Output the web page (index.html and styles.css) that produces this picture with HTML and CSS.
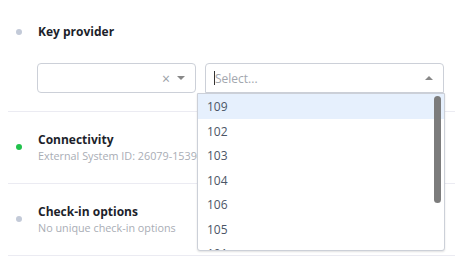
FILE: index.html
```html
<!DOCTYPE html>
<html>
  <head>
    <title>Property settings</title>
    <link rel="stylesheet" href="styles.css">
  </head>
  <body>
    <div class="settings">
      <div class="row row-key">
        <div class="row-head">
          <span class="dot"></span>
          <h3 class="title">Key provider</h3>
        </div>
        <div class="selects">
          <div class="select select-first">
            <span class="select-value"></span>
            <span class="clear">&times;</span>
            <span class="arrow arrow-down"></span>
          </div>
          <div class="select select-open">
            <span class="caret"></span>
            <span class="placeholder">Select...</span>
            <span class="arrow arrow-up"></span>
            <ul class="menu">
              <li class="active">109</li>
              <li>102</li>
              <li>103</li>
              <li>104</li>
              <li>106</li>
              <li>105</li>
              <li>101</li>
            </ul>
            <span class="thumb"></span>
          </div>
        </div>
      </div>

      <div class="row">
        <span class="dot dot-green"></span>
        <div>
          <h3 class="title">Connectivity</h3>
          <p class="sub">External System ID: 26079-15394</p>
        </div>
      </div>

      <div class="row">
        <span class="dot"></span>
        <div>
          <h3 class="title">Check-in options</h3>
          <p class="sub">No unique check-in options</p>
        </div>
      </div>
    </div>
  </body>
</html>
```

FILE: styles.css
```css
body,
html {
  margin: 0;
  height: 100%;
  overflow: hidden;
}

body {
  background: #fff;
  font-family: 'Open Sans', 'Noto Sans', sans-serif;
  color: #1d1f2b;
}

.settings {
  padding: 8px 0 0 8px;
}

.row {
  display: flex;
  align-items: center;
  padding: 19px 0 20px;
  border-bottom: 1px solid #ebebf2;
}

.row-key {
  display: block;
  padding: 15px 0 18px;
}

.row-head {
  display: flex;
  align-items: center;
}

.dot {
  width: 6px;
  height: 6px;
  border-radius: 50%;
  background: #c3cad8;
  margin-left: 8px;
  margin-right: 16px;
  flex-shrink: 0;
}

.dot-green {
  background: #21c24c;
}

.title {
  margin: 0;
  font-size: 12px;
  line-height: 17px;
  font-weight: 700;
}

.sub {
  margin: 0;
  font-size: 10.8px;
  line-height: 15px;
  color: #a9adb5;
  white-space: nowrap;
}

.selects {
  display: flex;
  gap: 9px;
  margin: 23px 0 0 29px;
}

.select {
  position: relative;
  display: flex;
  align-items: center;
  height: 30px;
  box-sizing: border-box;
  border: 1px solid #ccd0d8;
  border-radius: 4px;
  padding: 0 10px 0 8px;
  font-size: 12px;
}

.select-first {
  width: 159px;
}

.select-open {
  width: 239px;
  border-radius: 4px 4px 0 0;
}

.select-value {
  flex: 1;
}

.clear {
  color: #9a9ea6;
  font-size: 14px;
  margin-right: 7px;
}

.arrow {
  width: 0;
  height: 0;
  border-left: 4px solid transparent;
  border-right: 4px solid transparent;
}

.arrow-down {
  border-top: 4px solid #888;
}

.arrow-up {
  border-bottom: 4px solid #888;
}

.caret {
  width: 1px;
  height: 14px;
  background: #333;
}

.placeholder {
  flex: 1;
  color: #a3a7ae;
}

.menu {
  position: absolute;
  left: -9px;
  top: 29px;
  width: 248px;
  height: 158px;
  box-sizing: border-box;
  margin: 0;
  padding: 0;
  list-style: none;
  overflow: hidden;
  background: #fff;
  border: 1px solid #ccd0d8;
  border-radius: 0 0 3px 3px;
  box-shadow: 0 1px 2px rgba(0, 0, 0, 0.12);
  z-index: 2;
}

.menu li {
  padding: 5px 9px 4px;
  line-height: 15.5px;
  font-size: 12px;
  color: #4b5566;
}

.menu li.active {
  background: #e6f0fd;
}

.thumb {
  position: absolute;
  right: 2px;
  top: 32px;
  width: 7px;
  height: 107px;
  border-radius: 4px;
  background: #7c7c7c;
  z-index: 3;
}
```
